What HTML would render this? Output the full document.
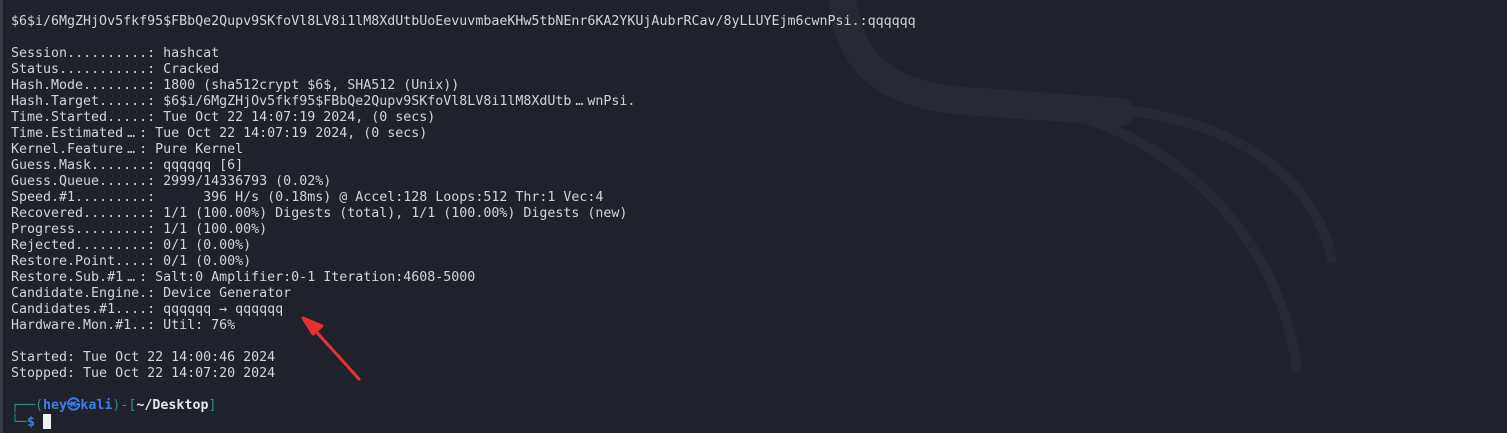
<!DOCTYPE html>
<html><head><meta charset="utf-8"><style>
html,body{margin:0;padding:0;width:1507px;height:433px;overflow:hidden;background:#1f222b;}
.term{position:absolute;left:0;top:0;width:1507px;height:433px;background:#1f222b;}
.bl{position:absolute;left:0;top:0;width:3px;height:433px;background:#3a3d45;}
svg{position:absolute;left:0;top:0;}
pre{position:absolute;left:11px;top:14px;margin:0;font-family:"DejaVu Sans Mono","Liberation Mono",monospace;font-size:13.3px;line-height:16px;color:#d4d4d6;white-space:pre;}
.e{display:inline-block;width:2ch;text-align:center;}
.f{color:#2f8f8a}.b{color:#3d7fe6;font-weight:bold}.w{color:#e6e6e6;font-weight:bold}
.cur{display:inline-block;width:8px;height:15px;background:#f0f0f0;vertical-align:-3px;}
</style></head><body>
<div class="term">
<svg width="1507" height="433">
<path d="M842 -5 C 848 60, 880 98, 980 102 L 1120 112" stroke="#262932" stroke-width="28" fill="none" stroke-linecap="round"/>
<path d="M1110 108 C 1230 120, 1310 170, 1332 258" stroke="#262932" stroke-width="10" fill="none" stroke-linecap="round"/>
<path d="M1090 120 C 1200 160, 1280 250, 1297 368" stroke="#262932" stroke-width="10" fill="none" stroke-linecap="round"/>
<path d="M359 379 L312 327" stroke="#e8322f" stroke-width="3" stroke-linecap="round"/>
<path d="M303 318 L322 326 L313 334 Z" fill="#e8322f" stroke="#e8322f" stroke-width="3" stroke-linejoin="round"/>
</svg>
<div class="bl"></div>
<pre>$6$i/6MgZHjOv5fkf95$FBbQe2Qupv9SKfoVl8LV8i1lM8XdUtbUoEevuvmbaeKHw5tbNEnr6KA2YKUjAubrRCav/8yLLUYEjm6cwnPsi.:qqqqqq

Session..........: hashcat
Status...........: Cracked
Hash.Mode........: 1800 (sha512crypt $6$, SHA512 (Unix))
Hash.Target......: $6$i/6MgZHjOv5fkf95$FBbQe2Qupv9SKfoVl8LV8i1lM8XdUtb<span class="e">…</span>wnPsi.
Time.Started.....: Tue Oct 22 14:07:19 2024, (0 secs)
Time.Estimated<span class="e">…</span>: Tue Oct 22 14:07:19 2024, (0 secs)
Kernel.Feature<span class="e">…</span>: Pure Kernel
Guess.Mask.......: qqqqqq [6]
Guess.Queue......: 2999/14336793 (0.02%)
Speed.#1.........:      396 H/s (0.18ms) @ Accel:128 Loops:512 Thr:1 Vec:4
Recovered........: 1/1 (100.00%) Digests (total), 1/1 (100.00%) Digests (new)
Progress.........: 1/1 (100.00%)
Rejected.........: 0/1 (0.00%)
Restore.Point....: 0/1 (0.00%)
Restore.Sub.#1<span class="e">…</span>: Salt:0 Amplifier:0-1 Iteration:4608-5000
Candidate.Engine.: Device Generator
Candidates.#1....: qqqqqq → qqqqqq
Hardware.Mon.#1<span class="e">..</span>: Util: 76%

Started: Tue Oct 22 14:00:46 2024
Stopped: Tue Oct 22 14:07:20 2024

<span class="f">┌──(</span><span class="b">hey㉿kali</span><span class="f">)-[</span><span class="w">~/Desktop</span><span class="f">]</span>
<span class="f">└─</span><span class="b">$</span> <span class="cur"></span></pre>
</div>
</body></html>
